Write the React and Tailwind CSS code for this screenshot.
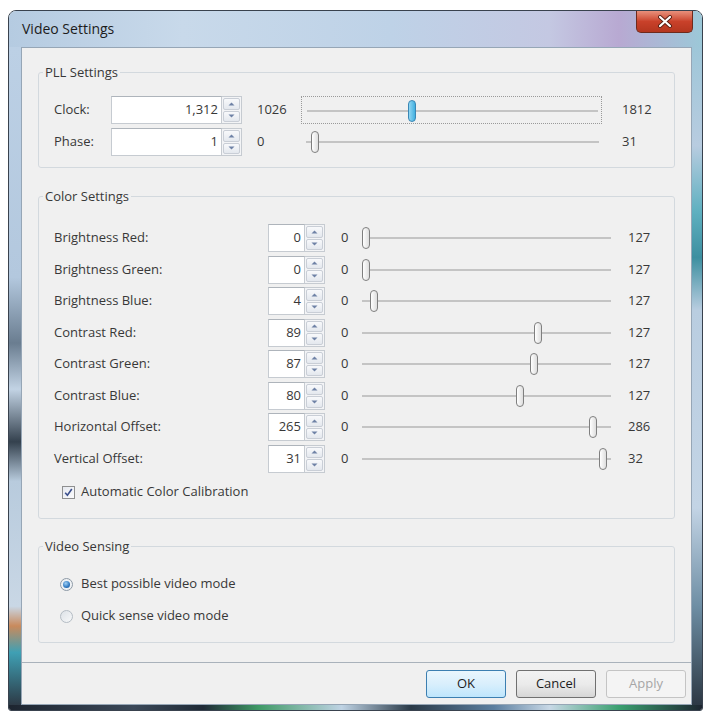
import React from "react";

function Arrow({ up }) {
  return (
    <svg width="7" height="4" viewBox="0 0 7 4">
      {up ? <path d="M0.5 3.5 L3.5 0.5 L6.5 3.5 Z" fill="#6f82a6" /> : <path d="M0.5 0.5 L3.5 3.5 L6.5 0.5 Z" fill="#6f82a6" />}
    </svg>
  );
}

function Spin({ value, textW }) {
  return (
    <div className="flex h-[28px]">
      <div className={`flex items-center justify-end bg-white border border-[#c6cbd1] border-t-[#aeb4bb] pr-[3px] ${textW}`}>{value}</div>
      <div className="flex flex-col w-[20px] bg-[#f3f4f6] border-y border-r border-[#c6cbd1] p-[1px] gap-[1px]">
        <div className="flex-1 flex items-center justify-center rounded-[2px] border border-[#c9ced6] bg-gradient-to-b from-[#f8f9fb] to-[#e4e8ee]">
          <Arrow up />
        </div>
        <div className="flex-1 flex items-center justify-center rounded-[2px] border border-[#c9ced6] bg-gradient-to-b from-[#f8f9fb] to-[#e4e8ee]">
          <Arrow />
        </div>
      </div>
    </div>
  );
}

function Slider({ f, w, pad, inL, inR, blue, focus }) {
  return (
    <div className={`relative h-[28px] ${w} ${focus ? "border border-dotted border-[#9a9a9a]" : ""}`}>
      <div
        className="absolute top-[13px] h-[2px] bg-[#c4c4c4]"
        style={{ left: inL, right: inR }}
      />
      <div
        className={`absolute top-[3px] h-[22px] w-[8px] rounded-full border ${
          blue
            ? "border-[#3a87b5] bg-gradient-to-r from-[#8fd6f2] to-[#3fb0e0]"
            : "border-[#7f7f7f] bg-gradient-to-r from-white to-[#dedede]"
        }`}
        style={{ left: `calc(${pad}px + ${f} * (100% - ${2 * pad}px) - 4px)` }}
      />
    </div>
  );
}

function ColorRow({ label, value, max, f }) {
  return (
    <div className="flex items-center h-[28px]">
      <div className="w-[214px]">{label}</div>
      <Spin value={value} textW="w-[37px]" />
      <div className="ml-[16px] w-[17px]">0</div>
      <Slider f={f} w="w-[261px]" pad={8} inL={4} inR={8} />
      <div className="ml-[9px]">{max}</div>
    </div>
  );
}

function Legend({ children }) {
  return <legend className="ml-[4px] px-[2px] leading-[20px]">{children}</legend>;
}

export default function App() {
  const rows = [
    ["Brightness Red:", "0", "127", 0 / 127],
    ["Brightness Green:", "0", "127", 0 / 127],
    ["Brightness Blue:", "4", "127", 4 / 127],
    ["Contrast Red:", "89", "127", 89 / 127],
    ["Contrast Green:", "87", "127", 87 / 127],
    ["Contrast Blue:", "80", "127", 80 / 127],
    ["Horizontal Offset:", "265", "286", 265 / 286],
    ["Vertical Offset:", "31", "32", 31 / 32],
  ];
  return (
    <div className="w-[709px] h-[717px] bg-white pl-[8px] pt-[10px] font-['Open_Sans',sans-serif] text-[13px] text-[#383838]">
      <div className="w-[695px] h-[701px] border border-[#39424e] rounded-t-[8px] rounded-b-[3px] overflow-hidden flex flex-col">
        {/* title bar */}
        <div className="h-[36px] flex items-start justify-between bg-[linear-gradient(90deg,#b5cbe1_0%,#c8d9ea_25%,#bed2e7_55%,#c4c8e2_78%,#b8a9d2_88%,#9cc8d8_100%)]">
          <div className="ml-[13px] mt-[9px] leading-[18px] text-[14px] text-[#1c1c1c]">Video Settings</div>
          <div className="mr-[9px] w-[57px] h-[22px] rounded-b-[5px] border border-t-0 border-[#6e2a1c] bg-gradient-to-b from-[#e8907c] via-[#c9412a] to-[#b4361f] flex items-center justify-center">
            <svg width="16" height="13" viewBox="0 0 16 13">
              <path d="M3 2 L13 11 M13 2 L3 11" stroke="#5a2015" strokeWidth="4" strokeLinecap="round" />
              <path d="M3 2 L13 11 M13 2 L3 11" stroke="#ffffff" strokeWidth="2.2" strokeLinecap="round" />
            </svg>
          </div>
        </div>
        {/* middle */}
        <div className="flex h-[658px]">
          <div className="w-[12px] bg-[linear-gradient(180deg,#bcd0e5_0%,#b3c8de_35%,#6a7d90_45%,#c2d3e4_52%,#34414e_60%,#b8cbdd_66%,#c9d7e5_85%,#c98a5c_88%,#3fa0b4_92%,#2d3a46_100%)]" />
          <div className="w-[671px] border border-[#96a6b6] bg-[#f0f0f0] flex flex-col">
            <div className="flex-1 px-[16px] pt-[14px]">
              {/* PLL */}
              <fieldset className="border border-[#d3d9de] rounded-[3px] px-0 pt-[14px] pb-[11px]">
                <Legend>PLL Settings</Legend>
                <div className="flex flex-col gap-[4px] pl-[15px]">
                  <div className="flex items-center h-[28px]">
                    <div className="w-[57px]">Clock:</div>
                    <Spin value="1,312" textW="w-[111px]" />
                    <div className="ml-[15px] w-[44px]">1026</div>
                    <Slider f={286 / 786} w="w-[301px]" pad={5} inL={5} inR={3} blue focus />
                    <div className="ml-[20px]">1812</div>
                  </div>
                  <div className="flex items-center h-[28px]">
                    <div className="w-[57px]">Phase:</div>
                    <Spin value="1" textW="w-[111px]" />
                    <div className="ml-[15px] w-[44px]">0</div>
                    <Slider f={1 / 31} w="w-[301px]" pad={5} inL={5} inR={3} />
                    <div className="ml-[20px]">31</div>
                  </div>
                </div>
              </fieldset>
              {/* Color */}
              <fieldset className="mt-[18px] border border-[#d3d9de] rounded-[3px] px-0 pt-[18px] pb-[16px]">
                <Legend>Color Settings</Legend>
                <div className="flex flex-col gap-[3.5px] pl-[15px]">
                  {rows.map((r) => (
                    <ColorRow key={r[0]} label={r[0]} value={r[1]} max={r[2]} f={r[3]} />
                  ))}
                </div>
                <div className="mt-[9.5px] h-[20px] flex items-center ml-[23px]">
                  <div className="w-[13px] h-[13px] border border-[#8e8f8f] bg-gradient-to-br from-[#e6e9ef] to-[#fbfbfc] flex items-center justify-center">
                    <svg width="9" height="9" viewBox="0 0 9 9">
                      <path d="M1.2 4.8 L3.4 7.3 L7.8 1" stroke="#3b4f8c" strokeWidth="1.6" fill="none" />
                    </svg>
                  </div>
                  <div className="ml-[6px]">Automatic Color Calibration</div>
                </div>
              </fieldset>
              {/* Video Sensing */}
              <fieldset className="mt-[17px] border border-[#d3d9de] rounded-[3px] px-0 pt-[18px] pb-[16px]">
                <Legend>Video Sensing</Legend>
                <div className="flex flex-col gap-[12px] pl-[21px]">
                  <div className="h-[20px] flex items-center">
                    <div className="w-[13px] h-[13px] rounded-full border border-[#8e9aa6] bg-[#eef1f4] flex items-center justify-center">
                      <div className="w-[7px] h-[7px] rounded-full bg-[radial-gradient(circle_at_40%_35%,#9fd0f5_0%,#2f78c0_60%,#1d4f8c_100%)]" />
                    </div>
                    <div className="ml-[8px]">Best possible video mode</div>
                  </div>
                  <div className="h-[20px] flex items-center">
                    <div className="w-[13px] h-[13px] rounded-full border border-[#b4bcc4] bg-gradient-to-br from-[#dde2e7] to-[#f7f8f9]" />
                    <div className="ml-[8px]">Quick sense video mode</div>
                  </div>
                </div>
              </fieldset>
            </div>
            {/* footer */}
            <div className="h-[42px] border-t border-[#a9b2bb] flex justify-end items-start pt-[7px] pr-[5px] gap-[10px]">
              <div className="w-[80px] h-[28px] rounded-[3px] border border-[#3c7fb1] bg-gradient-to-b from-[#eaf6fd] via-[#d9effc] to-[#bee6fd] flex items-center justify-center text-[#1c1c1c]">
                OK
              </div>
              <div className="w-[80px] h-[28px] rounded-[3px] border border-[#707070] bg-gradient-to-b from-[#f2f2f2] via-[#ebebeb] to-[#d6d6d6] flex items-center justify-center text-[#1c1c1c]">
                Cancel
              </div>
              <div className="w-[80px] h-[28px] rounded-[3px] border border-[#c4c4c4] bg-[#f4f4f4] flex items-center justify-center text-[#a6a6a6]">
                Apply
              </div>
            </div>
          </div>
          <div className="w-[10px] bg-[linear-gradient(180deg,#9ec6d8_0%,#b8cce0_15%,#5fb0c0_25%,#3d8fa0_32%,#b9cde0_40%,#c3d4e5_70%,#6e8ea4_85%,#2c3844_100%)]" />
        </div>
        <div className="h-[5px] bg-[linear-gradient(90deg,#1d2530_0%,#3b4858_18%,#1f2a36_28%,#3f9a66_36%,#bfd3e4_48%,#2a3a48_58%,#5c7fa0_70%,#c8d8e6_78%,#3aa070_88%,#1d2530_100%)]" />
      </div>
    </div>
  );
}
